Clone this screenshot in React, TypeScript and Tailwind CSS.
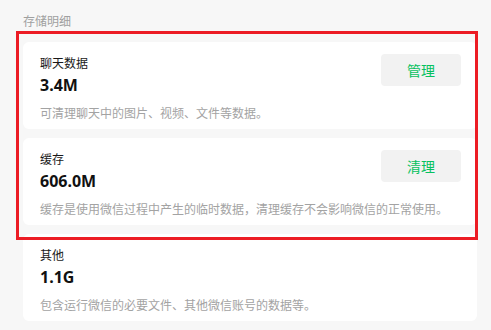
import React from 'react';

interface StorageItem {
  title: string;
  size: string;
  desc: string;
  action?: string;
}

const items: StorageItem[] = [
  { title: '聊天数据', size: '3.4M', desc: '可清理聊天中的图片、视频、文件等数据。', action: '管理' },
  { title: '缓存', size: '606.0M', desc: '缓存是使用微信过程中产生的临时数据，清理缓存不会影响微信的正常使用。', action: '清理' },
  { title: '其他', size: '1.1G', desc: '包含运行微信的必要文件、其他微信账号的数据等。' },
];

const font = { fontFamily: '"Noto Sans", "Noto Sans CJK SC", sans-serif' };

const StorageCard: React.FC<{ item: StorageItem }> = ({ item }) => (
  <div className="rounded-[6px] bg-white pl-[17px] pr-[16px] pt-[12px] pb-[6px]">
    <div className="flex items-start justify-between">
      <div>
        <div className="text-[12px] leading-[20px] text-[#191919]">{item.title}</div>
        <div className="text-[16px] font-bold leading-[22px] text-[#111]">{item.size}</div>
      </div>
      {item.action && (
        <button className="flex h-[32px] w-[80px] items-center justify-center rounded-[4px] bg-[#f2f2f2] text-[14px] text-[#07c160]">
          {item.action}
        </button>
      )}
    </div>
    <div className="mt-[9px] whitespace-nowrap text-[12px] leading-[18px] text-[#a3a3a3]">{item.desc}</div>
  </div>
);

export default function App() {
  return (
    <div className="relative h-[330px] w-[491px] overflow-hidden bg-[#f7f7f7]" style={font}>
      <div className="ml-[23px] w-[454px] pt-[14px]">
        <div className="text-[12px] leading-[16px] text-[#a0a0a0]">存储明细</div>
        <div className="mt-[12px] flex flex-col gap-[9px]">
          {items.map((item) => (
            <StorageCard key={item.title} item={item} />
          ))}
        </div>
      </div>
      {/* annotation highlight */}
      <div className="pointer-events-none absolute left-[16px] top-[31px] h-[209px] w-[462px] border-[3px] border-[#ec1c24]" />
    </div>
  );
}
